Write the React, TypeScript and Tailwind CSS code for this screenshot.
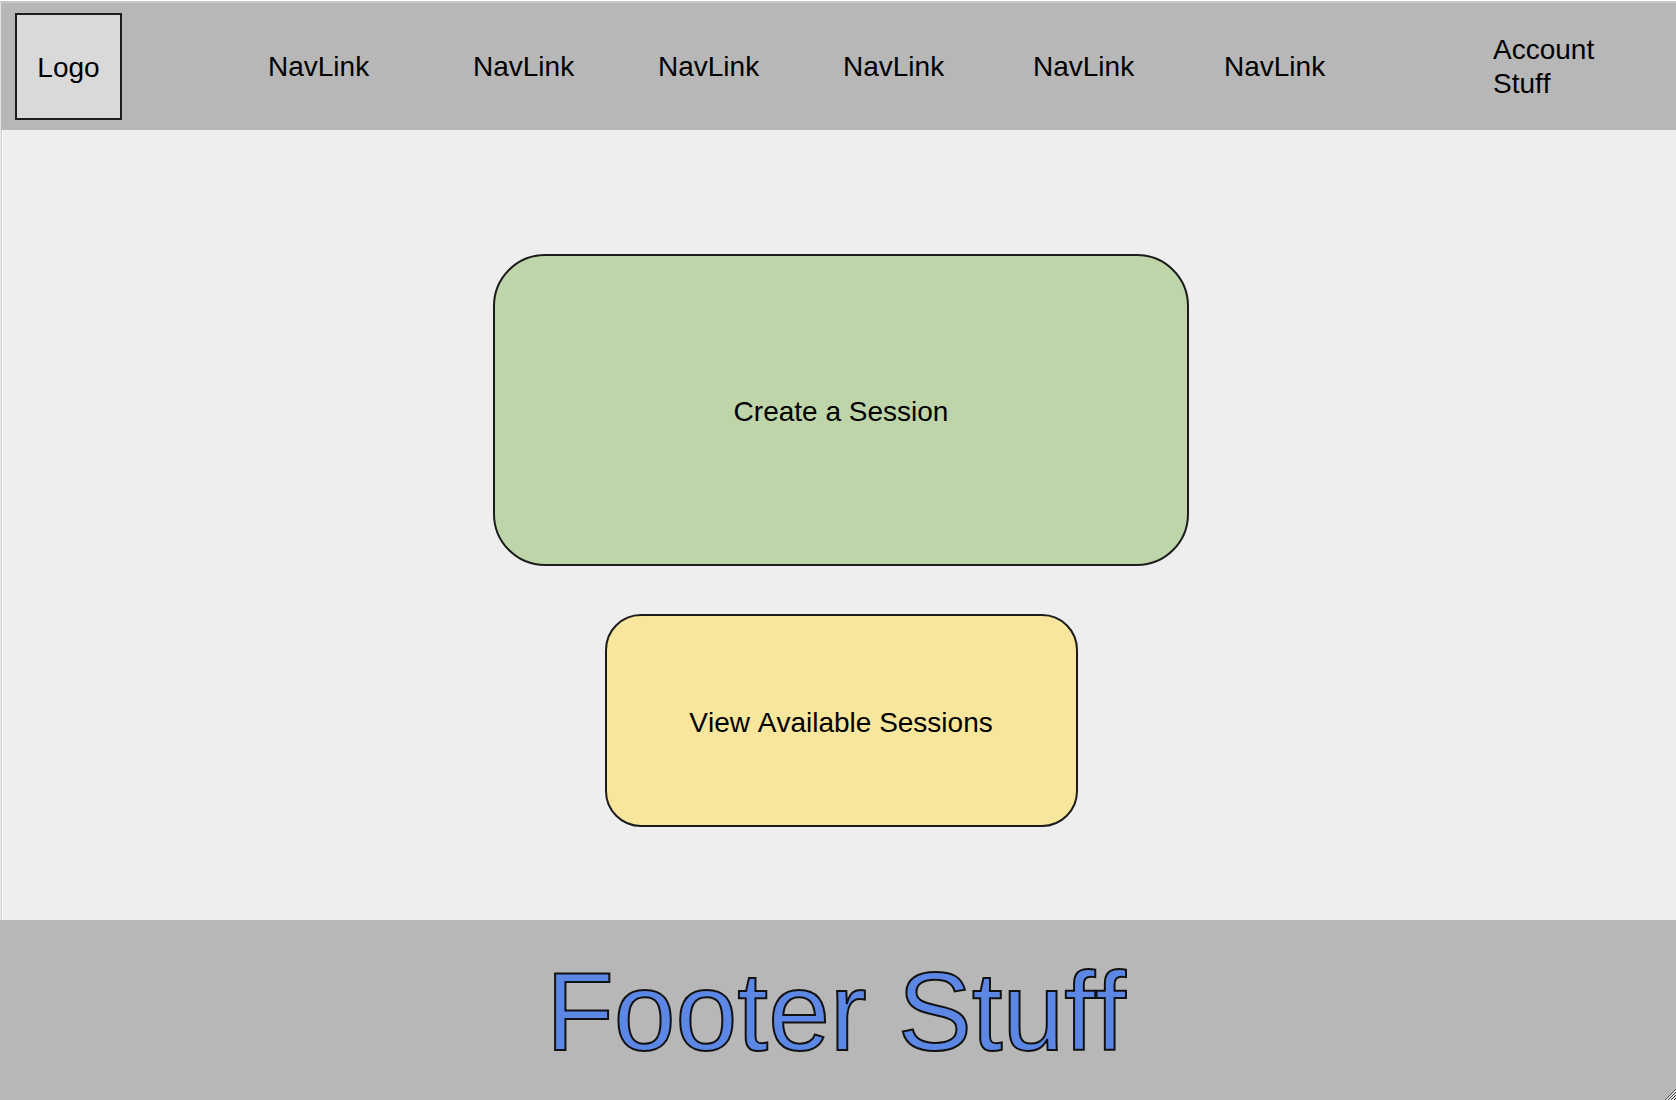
const links = [1, 2, 3, 4, 5, 6];

function ResizeGrip() {
  return (
    <svg
      aria-hidden="true"
      viewBox="0 0 12 12"
      className="absolute right-0 bottom-0 h-3 w-3"
    >
      <path d="M0 12L12 0V12Z" fill="#e4e4e4" />
      <path d="M1 12L12 1M4 12L12 4M7 12L12 7M10 12L12 10" stroke="#3c3c3c" strokeWidth="1" />
    </svg>
  );
}

export default function App() {
  return (
    <div className="flex min-h-screen flex-col bg-[#eeeeee] font-['Liberation_Sans',Arial,sans-serif] text-[28px] leading-[34px] text-black [font-kerning:none]">
      <header className="border-t border-white bg-[#b7b7b7]">
        <nav
          aria-label="Main"
          className="grid min-h-[129px] grid-cols-[253fr_205fr_185fr_185fr_190fr_191fr_269fr_183fr] items-center border-t-2 border-l border-t-[#c4c6c5] border-l-[#e4e4e4] pl-[14px]"
        >
          <a
            href="#home"
            className="flex h-[107px] w-[107px] items-center justify-center border-2 border-[#1c1c1c] bg-[#d9d9d9] pt-0.5"
          >
            Logo
          </a>
          {links.map((n) => (
            <a key={n} href={`#nav-${n}`}>
              NavLink
            </a>
          ))}
          <a href="#account">
            Account
            <br />
            Stuff
          </a>
        </nav>
      </header>

      <main className="flex flex-1 flex-col items-center gap-12 pt-[124px] pb-[92px] pl-1.5 shadow-[inset_1px_0_0_#e8e8e8,inset_2px_0_0_#d0d0d0,inset_3px_0_0_#ffffff]">
        <button
          type="button"
          className="h-[312px] w-[696px] max-w-full rounded-[52px] border-2 border-[#1c1c1c] bg-[#bdd5a9] pt-1"
        >
          Create a Session
        </button>
        <button
          type="button"
          className="h-[213px] w-[473px] max-w-full rounded-[36px] border-2 border-[#1c1c1c] bg-[#f8e69d] pt-1"
        >
          View Available Sessions
        </button>
      </main>

      <footer className="relative flex min-h-[180px] items-center justify-center bg-[#b7b7b7] pt-1 pr-1">
        <p className="text-[111px] leading-[126px] text-[#5c87e5] [-webkit-text-stroke:2px_#111111]">
          Footer Stuff
        </p>
        <ResizeGrip />
      </footer>
    </div>
  );
}
